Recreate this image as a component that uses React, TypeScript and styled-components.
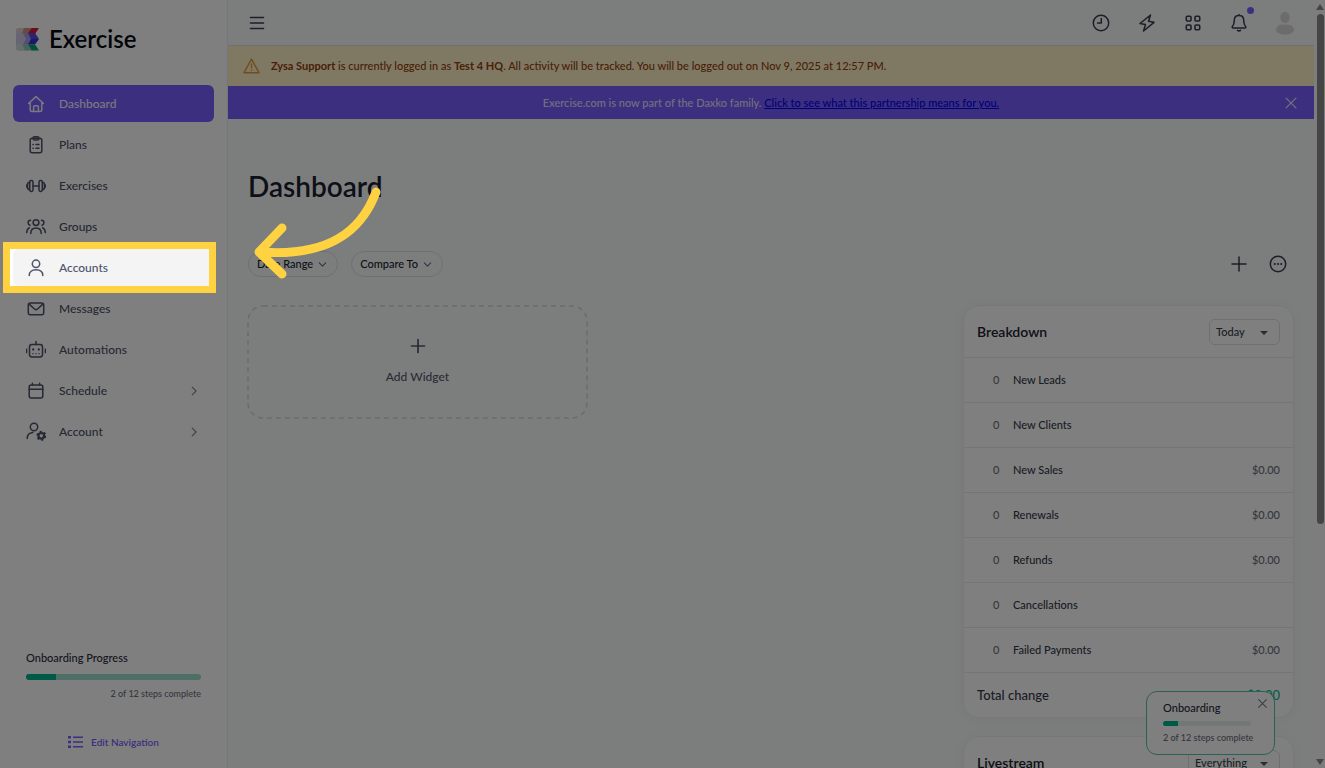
import React from "react";
import styled, { createGlobalStyle } from "styled-components";

const Global = createGlobalStyle`
  * { box-sizing: border-box; }
  body {
    margin: 0;
    overflow: hidden;
    background: #f9fdfc;
    color: #2a2c3c;
    font-family: Lato, "Open Sans", sans-serif;
    font-size: 12px;
    line-height: 16px;
  }
  button, select { font: inherit; color: inherit; margin: 0; cursor: pointer; }
  h1, h2, p { margin: 0; }
  svg { display: block; flex: none; }
`;

const Shell = styled.div`
  display: flex;
  height: 100vh;
  overflow: hidden;
`;

const Sidebar = styled.aside`
  flex: 0 0 228px;
  display: flex;
  flex-direction: column;
  background: #fff;
  border-right: 1px solid #e9edf0;
`;

const Brand = styled.a`
  display: flex;
  align-items: center;
  gap: 10px;
  height: 78px;
  padding-left: 16px;
  color: #06080f;
  font-size: 24px;
  line-height: 30px;
  font-weight: 600;
  text-decoration: none;
`;

const NavList = styled.nav`
  display: flex;
  flex-direction: column;
  gap: 4px;
  padding: 7px 13px 0;
`;

const NavItem = styled.a<{ $state?: "active" | "hover" }>`
  position: relative;
  display: flex;
  align-items: center;
  height: 37px;
  padding: 0 14px 0 12px;
  border-radius: 6px;
  font-weight: 500;
  text-decoration: none;
  color: ${(p) => (p.$state === "active" ? "#f4f2ff" : "#4e526a")};
  background: ${(p) =>
    p.$state === "active" ? "#7a5fff" : p.$state === "hover" ? "#f4f4f5" : "transparent"};
`;

const NavIcon = styled.span`
  display: flex;
  justify-content: center;
  width: 22px;
  margin-right: 12px;
`;

const NavText = styled.span`
  flex: 1;
`;

const NavMore = styled.span`
  color: #7f8294;
`;

/* Dims the whole page except for the highlighted entry. */
const Spotlight = styled.span`
  position: absolute;
  z-index: 50;
  top: -7px;
  bottom: -7px;
  left: -10px;
  right: -2px;
  border: 7px solid #ffd242;
  box-shadow: 0 0 0 3000px rgba(0, 0, 0, 0.5);
  pointer-events: none;
`;

const Pointer = styled.svg`
  position: absolute;
  z-index: 60;
  top: -64px;
  left: 240px;
`;

const SideFoot = styled.div`
  display: flex;
  flex-direction: column;
  margin-top: auto;
  padding: 0 26px 18px;
`;

const Caption = styled.p`
  font-size: 11px;
  line-height: 16px;
  font-weight: 500;
  color: #2a2c3c;
`;

const Track = styled.div<{ $small?: boolean }>`
  height: ${(p) => (p.$small ? 5 : 6)}px;
  margin-top: ${(p) => (p.$small ? 5 : 8)}px;
  border-radius: 3px;
  overflow: hidden;
  background: ${(p) => (p.$small ? "#e3f0ed" : "#9edccd")};
`;

const Fill = styled.div`
  width: 17%;
  height: 100%;
  background: #00b28c;
`;

const Steps = styled.p<{ $end?: boolean }>`
  margin-top: ${(p) => (p.$end ? 6 : 4)}px;
  font-size: 9px;
  line-height: 16px;
  font-weight: 500;
  text-align: ${(p) => (p.$end ? "right" : "left")};
  white-space: nowrap;
  color: #6b6f80;
`;

const EditNav = styled.button`
  display: flex;
  align-items: center;
  align-self: center;
  gap: 8px;
  margin-top: 32px;
  padding: 0;
  border: 0;
  background: none;
  color: #7a5fff;
  font-size: 10px;
  line-height: 16px;
  font-weight: 600;
`;

const Main = styled.div`
  flex: 1;
  min-width: 0;
  display: flex;
  flex-direction: column;
`;

const Topbar = styled.header`
  flex: none;
  display: flex;
  align-items: center;
  justify-content: space-between;
  height: 46px;
  padding: 0 16px 0 19px;
  border-bottom: 1px solid #dfe1ee;
`;

const TopActions = styled.div`
  display: flex;
  align-items: center;
  gap: 20px;
`;

const IconButton = styled.button`
  position: relative;
  display: flex;
  align-items: center;
  justify-content: center;
  min-width: 20px;
  height: 26px;
  padding: 0;
  border: 0;
  background: none;
  color: #3a3c4c;
`;

const TopButton = styled(IconButton)`
  width: 26px;
`;

const PromoClose = styled(IconButton)`
  color: #e4deff;
`;

const Dot = styled.span`
  position: absolute;
  top: -3px;
  right: -2px;
  width: 7px;
  height: 7px;
  border-radius: 50%;
  background: #7a5fff;
`;

const Notice = styled.div`
  flex: none;
  display: flex;
  align-items: center;
  gap: 11px;
  height: 40px;
  padding: 0 15px;
  background: #fef3c7;
  color: #92400e;
  font-size: 11px;
  font-weight: 500;
`;

const Promo = styled.div`
  flex: none;
  display: flex;
  align-items: center;
  height: 33px;
  padding: 0 13px;
  background: #7a5fff;
  color: #e4deff;
  font-size: 11px;
  font-weight: 500;
`;

const PromoText = styled.p`
  flex: 1;
  padding-left: 20px;
  text-align: center;

  a { color: #0000ee; }
`;

const Content = styled.main`
  flex: 1;
  min-height: 0;
  padding: 47px 20px 0;
`;

const Title = styled.h1`
  font-size: 28px;
  line-height: 40px;
  font-weight: 600;
  color: #1c2030;
`;

const Filters = styled.div`
  display: flex;
  align-items: center;
  gap: 13px;
  margin-top: 45px;
`;

const Pill = styled.button`
  display: flex;
  align-items: center;
  gap: 5px;
  height: 26px;
  padding: 0 10px 0 8px;
  border: 1px solid #dddeed;
  border-radius: 13px;
  background: transparent;
  font-size: 11px;
  font-weight: 500;
  color: #1c2030;

  svg { color: #6a6d80; }
`;

const FilterActions = styled.div`
  display: flex;
  gap: 19px;
  margin-left: auto;
  padding-right: 6px;
`;

const Columns = styled.div`
  display: flex;
  align-items: flex-start;
  gap: 20px;
  margin-top: 28px;
`;

const Widgets = styled.div`
  flex: 1;
  display: grid;
  grid-template-columns: 1fr 1fr;
  gap: 17px;
  padding-top: 1px;
`;

const AddWidget = styled.button`
  display: flex;
  flex-direction: column;
  align-items: center;
  justify-content: center;
  gap: 13px;
  height: 112px;
  padding: 0 0 4px;
  border: 0;
  position: relative;
  background: transparent;
  font-weight: 500;
  color: #55586c;
`;

const DashedFrame = styled.svg`
  position: absolute;
  inset: 0;
  width: 100%;
  height: 100%;
  overflow: visible;
`;

const Cards = styled.div`
  flex: 0 0 331px;
  display: flex;
  flex-direction: column;
  gap: 18px;
`;

const Card = styled.section`
  border: 1px solid #eef0f1;
  border-radius: 16px;
  background: #fff;
  box-shadow: 0 2px 16px rgba(80, 20, 20, 0.06);
`;

const CardHead = styled.div`
  display: flex;
  align-items: center;
  justify-content: space-between;
  height: 51px;
  padding: 0 13px;
`;

const CardTitle = styled.h2`
  font-size: 14px;
  line-height: 20px;
  font-weight: 600;
  color: #1c2030;
`;

const SelectBox = styled.span`
  position: relative;

  svg {
    position: absolute;
    top: 12px;
    right: 12px;
    pointer-events: none;
  }
`;

const Select = styled.select<{ $wide?: boolean }>`
  appearance: none;
  display: block;
  width: ${(p) => (p.$wide ? 92 : 71)}px;
  height: 26px;
  padding: 0 24px 0 6px;
  border: 1px solid #dcdfe2;
  border-radius: 6px;
  background: #fff;
  color: #3a3d4c;
  font-size: 11px;
  font-weight: 500;
`;

const Table = styled.table`
  width: 100%;
  border-collapse: separate;
  border-spacing: 0;
  font-size: 11px;
  color: #34384a;

  td, th {
    height: 45px;
    padding: 0;
    border-top: 1px solid #e8eaeb;
    font-weight: 500;
    text-align: left;
  }
  tfoot { font-size: 13px; }
`;

const Count = styled.td`
  width: 49px;
  color: #6b7080;

  && { padding-left: 29px; }
`;

const Amount = styled.td`
  color: #6b7080;

  && { padding-right: 13px; text-align: right; }
`;

const TotalLabel = styled.th`
  && { padding-left: 13px; }
`;

const TotalAmount = styled(Amount)`
  color: #12b58f;
`;

const Toast = styled.div`
  position: absolute;
  z-index: 10;
  right: 50px;
  bottom: 13px;
  width: 129px;
  padding: 8px 23px 0 16px;
  height: 64px;
  border: 1px solid #4fc7a8;
  border-radius: 11px;
  background: #fff;
`;

const ToastClose = styled.button`
  position: absolute;
  top: 6px;
  right: 6px;
  padding: 0;
  border: 0;
  background: none;
  color: #777b88;
`;

const Scrollbar = styled.div`
  flex: 0 0 11px;
  display: flex;
  flex-direction: column;
  align-items: center;
  justify-content: space-between;
  padding: 4px 1px 3px 2px;
  background: #fbfbfb;
`;

const Thumb = styled.div`
  width: 7px;
  height: 67%;
  margin-top: 4px;
  margin-bottom: auto;
  border-radius: 4px;
  background: #8a8a8a;
`;

type GlyphProps = { size?: number; children: React.ReactNode; stroke?: number };

const Glyph = ({ size = 20, stroke = 1.5, children }: GlyphProps) => (
  <svg
    width={size}
    height={size}
    viewBox="0 0 20 20"
    fill="none"
    stroke="currentColor"
    strokeWidth={stroke}
    strokeLinecap="round"
    strokeLinejoin="round"
    aria-hidden="true"
  >
    {children}
  </svg>
);

const HomeIcon = () => (
  <Glyph>
    <path d="M2.500 9.500 10 2.600l7.500 6.900M4.200 8v7.600c0 1.100.6 1.800 1.700 1.800h8.200c1.100 0 1.700-.7 1.700-1.800V8M7.600 17.300v-4.200c0-.9.5-1.400 1.300-1.400h2.200c.8 0 1.300.5 1.300 1.400v4.200" />
  </Glyph>
);
const PlansIcon = () => (
  <Glyph>
    <rect x="4.2" y="3.3" width="11.6" height="14.4" rx="2" />
    <path d="M7 3.4c0-1.2.6-1.6 1.6-1.6h2.8c1 0 1.6.4 1.6 1.6 0 1-.6 1.6-1.6 1.6H8.6C7.600 5 7 4.400 7 3.400ZM7 9.600h.3M10 9.600h3M7 13.200h.3M10 13.200h3" />
  </Glyph>
);
const DumbbellIcon = () => (
  <Glyph>
    <rect x="3.700" y="4.600" width="3.300" height="10.800" rx="1.400" />
    <rect x="13" y="4.600" width="3.300" height="10.800" rx="1.400" />
    <path d="M7 10h6M3.700 6.300c-1.500 0-2.100.6-2.100 2.100v3.200c0 1.500.6 2.100 2.100 2.100M16.300 6.300c1.500 0 2.100.6 2.100 2.100v3.200c0 1.500-.6 2.100-2.100 2.100M.6 9v2M19.400 9v2" />
  </Glyph>
);
const GroupsIcon = () => (
  <Glyph>
    <circle cx="10" cy="5.600" r="2.900" />
    <path d="M4.800 16.400c0-3.200 2-5.400 5.200-5.400s5.200 2.200 5.200 5.400M4.600 3.200C3 3.200 2.100 4.300 2.100 5.700c0 1.200.7 2.100 1.800 2.500M15.400 3.200c1.600 0 2.500 1.100 2.500 2.500 0 1.200-.7 2.100-1.800 2.500M.7 15.600c0-2.400.9-4.100 2.700-4.900M19.300 15.600c0-2.400-.9-4.100-2.700-4.900" />
  </Glyph>
);
const UserIcon = () => (
  <Glyph>
    <circle cx="10" cy="5.800" r="3.700" />
    <path d="M3.200 17.500c0-3.600 2.600-5.800 6.800-5.800s6.800 2.200 6.800 5.800" />
  </Glyph>
);
const MailIcon = () => (
  <Glyph>
    <rect x="2.300" y="4" width="15.400" height="11.700" rx="2" />
    <path d="m2.900 4.900 5.600 5.100c.9.8 2.100.8 3 0l5.600-5.100" />
  </Glyph>
);
const RobotIcon = () => (
  <Glyph>
    <rect x="3.500" y="4.600" width="13" height="12.400" rx="2.400" />
    <path d="M10 1.600v3M.6 9.200v3.400M19.400 9.200v3.400" />
    <path d="M6.800 13.700h.2M9.900 13.700h.2M13 13.700h.2" strokeWidth="1.200" />
    <path d="M7.200 9.400v.2M12.800 9.400v.2" strokeWidth="2.200" />
  </Glyph>
);
const CalendarIcon = () => (
  <Glyph>
    <rect x="3.200" y="4" width="13.600" height="13" rx="2" />
    <path d="M3.200 8.300h13.600M6.400 4V2.300M13.600 4V2.300" />
  </Glyph>
);
const AccountIcon = () => (
  <Glyph>
    <circle cx="8" cy="5" r="3.700" />
    <path d="M1.200 16.500c0-3.700 2-5.600 5.600-6" />
    <circle cx="15.300" cy="13.800" r="2.800" strokeWidth="2.200" />
    <circle cx="15.300" cy="13.800" r="4.200" strokeWidth="1.600" strokeDasharray="2.200 2.200" strokeLinecap="butt" />
  </Glyph>
);
const Chevron = ({ down }: { down?: boolean }) => (
  <Glyph size={down ? 9 : 12} stroke={down ? 2.600 : 1.800}>
    <path d={down ? "m3 6.500 7 7 7-7" : "m7 3.500 6.500 6.500L7 16.500"} />
  </Glyph>
);
const CloseIcon = ({ size = 14 }: { size?: number }) => (
  <Glyph size={size} stroke={1.900}>
    <path d="m3 3 14 14M17 3 3 17" />
  </Glyph>
);
const Caret = () => (
  <svg width="8" height="4" viewBox="0 0 8 4" fill="#55585f" aria-hidden="true">
    <path d="M0 0h8L4 4Z" />
  </svg>
);

const Logo = () => (
  <svg width="23" height="24" viewBox="0 0 23 24" aria-hidden="true">
    <path d="M3 1h9l3 5-3 6 3 5.500-3 6H3a3 3 0 0 1-3-3V4a3 3 0 0 1 3-3Z" fill="#cfcbea" />
    <path d="M3 1h7l-3 5H0V4a3 3 0 0 1 3-3Z" fill="#e0cfcf" />
    <path d="M8 1h9l-4 5.500H6Z" fill="#cf9478" />
    <path d="M16 1h7l-4 6-7-1Z" fill="#d9173f" />
    <path d="m7 6.500 6-.5 3 6-4 5.500H7l3-5.500Z" fill="#a79be8" />
    <path d="M12 6h7l4 6h-8Z" fill="#5a48d8" />
    <path d="M15 12h8l-4 5.500h-7Z" fill="#3330d8" />
    <path d="M12 17.500h7l4 6h-8Z" fill="#00a078" />
    <path d="M6 17.500h6l4 6H9Z" fill="#8fc9b8" />
    <path d="M0 17.500h6l3 6H3a3 3 0 0 1-3-3Z" fill="#cbdcd6" />
  </svg>
);

const nav = [
  { label: "Dashboard", icon: <HomeIcon />, state: "active" as const },
  { label: "Plans", icon: <PlansIcon /> },
  { label: "Exercises", icon: <DumbbellIcon /> },
  { label: "Groups", icon: <GroupsIcon /> },
  { label: "Accounts", icon: <UserIcon />, state: "hover" as const },
  { label: "Messages", icon: <MailIcon /> },
  { label: "Automations", icon: <RobotIcon /> },
  { label: "Schedule", icon: <CalendarIcon />, more: true },
  { label: "Account", icon: <AccountIcon />, more: true },
];

const rows = [
  ["New Leads", ""],
  ["New Clients", ""],
  ["New Sales", "$0.00"],
  ["Renewals", "$0.00"],
  ["Refunds", "$0.00"],
  ["Cancellations", ""],
  ["Failed Payments", "$0.00"],
];

export default function App() {
  return (
    <Shell>
      <Global />
      <Sidebar>
        <Brand href="#">
          <Logo />
          Exercise
        </Brand>
        <NavList>
          {nav.map((n) => (
            <NavItem key={n.label} href="#" $state={n.state}>
              <NavIcon>{n.icon}</NavIcon>
              <NavText>{n.label}</NavText>
              {n.more && (
                <NavMore>
                  <Chevron />
                </NavMore>
              )}
              {n.state === "hover" && (
                <>
                  <Spotlight />
                  <Pointer width="132" height="96" viewBox="0 0 132 96" fill="none" aria-hidden="true">
                    <path
                      d="M123 7C108 47 75 72 8 67M29 43 6 67l23 22"
                      stroke="#ffd242"
                      strokeWidth="9"
                      strokeLinecap="round"
                      strokeLinejoin="round"
                    />
                  </Pointer>
                </>
              )}
            </NavItem>
          ))}
        </NavList>
        <SideFoot>
          <Caption>Onboarding Progress</Caption>
          <Track>
            <Fill />
          </Track>
          <Steps $end>2 of 12 steps complete</Steps>
          <EditNav>
            <svg width="15" height="12" viewBox="0 0 15 12" fill="currentColor" aria-hidden="true">
              <path d="M0 0h3v2.500H0zM5 .5h10v1.600H5zM0 4.800h3v2.500H0zM5 5.200h10v1.600H5zM0 9.500h3V12H0zM5 10h10v1.600H5z" />
            </svg>
            Edit Navigation
          </EditNav>
        </SideFoot>
      </Sidebar>

      <Main>
        <Topbar>
          <IconButton aria-label="Toggle menu">
            <Glyph stroke={1.600}>
              <path d="M3.500 4.500h13M3.500 10h13M3.500 15.500h13" />
            </Glyph>
          </IconButton>
          <TopActions>
            <TopButton aria-label="History">
              <Glyph>
                <circle cx="10" cy="10" r="7.700" />
                <path d="M10.300 5.500V10H6.500" />
              </Glyph>
            </TopButton>
            <TopButton aria-label="Quick actions">
              <Glyph>
                <path d="M13.500 2 3 10.500l5.500 1L6.500 18 17 9.300l-5.500-1Z" />
              </Glyph>
            </TopButton>
            <TopButton aria-label="Apps">
              <Glyph stroke={1.600}>
                <rect x="3.300" y="3.300" width="4.700" height="4.700" rx="1" />
                <rect x="12" y="3.300" width="4.700" height="4.700" rx="1" />
                <rect x="3.300" y="12" width="4.700" height="4.700" rx="1" />
                <rect x="12" y="12" width="4.700" height="4.700" rx="1" />
              </Glyph>
            </TopButton>
            <TopButton aria-label="Notifications">
              <Glyph>
                <path d="M10 2.500c-3 0-4.700 2-4.700 4.700 0 3.300-.7 5-1.900 6.300-.5.600-.2 1.400.7 1.400h11.800c.9 0 1.200-.8.700-1.400-1.200-1.300-1.900-3-1.900-6.300 0-2.700-1.700-4.700-4.700-4.700ZM10 2.500V1.600M8.500 17.300c.8.600 2.200.6 3 0" />
              </Glyph>
              <Dot />
            </TopButton>
            <TopButton aria-label="Profile">
              <svg width="26" height="26" viewBox="0 0 26 26" aria-hidden="true">
                <circle cx="13" cy="13" r="13" fill="#fafafa" />
                <ellipse cx="13" cy="7.500" rx="4.700" ry="5.700" fill="#d9d9d9" />
                <path d="M4 20.500c0-4.500 3.500-6 9-6s9 1.500 9 6c-1.500 3-5 4-9 4s-7.500-1-9-4Z" fill="#d9d9d9" />
              </svg>
            </TopButton>
          </TopActions>
        </Topbar>
        <Notice role="status">
          <svg width="17" height="16" viewBox="0 0 17 16" fill="none" stroke="#e39a3b" strokeWidth="1.400" strokeLinejoin="round" strokeLinecap="round" aria-hidden="true">
            <path d="M8.500 1.200 16 14.700H1ZM8.500 6v4M8.500 12.200v.2" />
          </svg>
          <p>
            <b>Zysa Support</b> is currently logged in as <b>Test 4 HQ</b>. All activity will be
            tracked. You will be logged out on Nov 9, 2025 at 12:57 PM.
          </p>
        </Notice>
        <Promo>
          <PromoText>
            Exercise.com is now part of the Daxko family.{" "}
            <a href="#">Click to see what this partnership means for you.</a>
          </PromoText>
          <PromoClose aria-label="Dismiss">
            <CloseIcon />
          </PromoClose>
        </Promo>

        <Content>
          <Title>Dashboard</Title>
          <Filters>
            <Pill>
              Date Range <Chevron down />
            </Pill>
            <Pill>
              Compare To <Chevron down />
            </Pill>
            <FilterActions>
              <IconButton aria-label="Add">
                <Glyph>
                  <path d="M10 3v14M3 10h14" />
                </Glyph>
              </IconButton>
              <IconButton aria-label="More options">
                <Glyph>
                  <circle cx="10" cy="10" r="7.700" />
                  <path d="M6.700 10h.1M10 10h.1M13.200 10h.1" strokeWidth="2" />
                </Glyph>
              </IconButton>
            </FilterActions>
          </Filters>
          <Columns>
            <Widgets>
              <AddWidget>
                <DashedFrame aria-hidden="true">
                  <rect width="100%" height="100%" rx="15" fill="none" stroke="#d3d6d8" strokeWidth="1.500" strokeDasharray="5 4" />
                </DashedFrame>
                <Glyph stroke={1.700}>
                  <path d="M10 3.500v13M3.500 10h13" />
                </Glyph>
                Add Widget
              </AddWidget>
            </Widgets>
            <Cards>
              <Card>
                <CardHead>
                  <CardTitle>Breakdown</CardTitle>
                  <SelectBox>
                    <Select aria-label="Breakdown period">
                      <option>Today</option>
                    </Select>
                    <Caret />
                  </SelectBox>
                </CardHead>
                <Table>
                  <tbody>
                    {rows.map(([label, amount]) => (
                      <tr key={label}>
                        <Count>0</Count>
                        <th scope="row">{label}</th>
                        <Amount>{amount}</Amount>
                      </tr>
                    ))}
                  </tbody>
                  <tfoot>
                    <tr>
                      <TotalLabel scope="row" colSpan={2}>
                        Total change
                      </TotalLabel>
                      <TotalAmount>$0.00</TotalAmount>
                    </tr>
                  </tfoot>
                </Table>
              </Card>
              <Card>
                <CardHead>
                  <CardTitle>Livestream</CardTitle>
                  <SelectBox>
                    <Select $wide aria-label="Livestream filter">
                      <option>Everything</option>
                    </Select>
                    <Caret />
                  </SelectBox>
                </CardHead>
              </Card>
            </Cards>
          </Columns>
        </Content>
      </Main>

      <Scrollbar aria-hidden="true">
        <svg width="8" height="6" viewBox="0 0 8 6" fill="#8a8a8a">
          <path d="M0 6h8L4 0Z" />
        </svg>
        <Thumb />
        <svg width="8" height="6" viewBox="0 0 8 6" fill="#8a8a8a">
          <path d="M0 0h8L4 6Z" />
        </svg>
      </Scrollbar>

      <Toast>
        <Caption>Onboarding</Caption>
        <Track $small>
          <Fill />
        </Track>
        <Steps>2 of 12 steps complete</Steps>
        <ToastClose aria-label="Close">
          <CloseIcon size={11} />
        </ToastClose>
      </Toast>
    </Shell>
  );
}
